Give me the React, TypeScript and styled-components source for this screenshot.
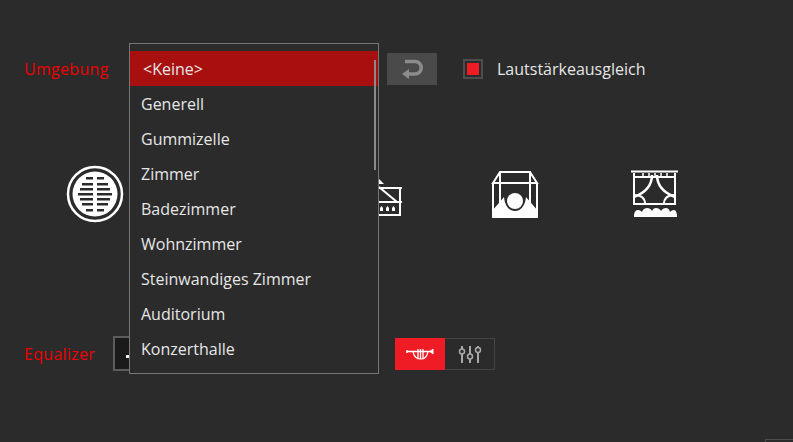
import React from "react"
import styled, { createGlobalStyle } from "styled-components"

const GlobalStyle = createGlobalStyle`
  html, body {
    margin: 0;
    padding: 0;
    background: #2b2b2b;
  }
`

const Page = styled.div`
  position: relative;
  width: 793px;
  height: 442px;
  overflow: hidden;
  box-sizing: border-box;
  padding: 53px 0 0 25px;
  background: #2b2b2b;
  font-family: "Open Sans", "Noto Sans", sans-serif;
  font-size: 16px;
  color: #e6e6e6;
`

const Row = styled.div`
  display: flex;
  align-items: center;
`

const FieldLabel = styled.div<{ $width: number }>`
  width: ${props => props.$width}px;
  margin-left: -1px;
  color: #f00000;
  font-size: 16px;
  letter-spacing: 0.3px;
`

const ComboSpacer = styled.div`
  width: 258px;
  height: 32px;
`

const ResetButton = styled.div`
  width: 50px;
  height: 32px;
  display: flex;
  align-items: center;
  justify-content: center;
  background: #4a4a4a;
  margin-right: 26px;
`

const CheckBox = styled.div`
  width: 20px;
  height: 20px;
  box-sizing: border-box;
  border: 2px solid #4d4d4d;
  padding: 2px;
  margin-right: 14px;
`

const CheckMark = styled.div`
  width: 12px;
  height: 12px;
  background: #ef1c25;
`

const IconRow = styled.div`
  display: grid;
  grid-template-columns: repeat(5, 140px);
  height: 60px;
  margin-top: 79px;
  align-items: center;
  justify-items: center;
`

const EqRow = styled(Row)`
  margin-top: 112px;
`

const EqCombo = styled.div`
  width: 260px;
  height: 35px;
  box-sizing: border-box;
  display: flex;
  align-items: center;
  padding: 5px 0 0 11px;
  border: 2px solid #5c5c5c;
  background: #1a1a1a;
  margin-right: 22px;
`

const ComboGlyph = styled.div`
  width: 3px;
  height: 3px;
  background: #f0f0f0;
`

const ToggleGroup = styled.div`
  display: flex;
  height: 32px;
`

const Toggle = styled.div<{ $active?: boolean }>`
  width: 50px;
  height: 32px;
  box-sizing: border-box;
  display: flex;
  align-items: center;
  justify-content: center;
  background: ${props => (props.$active ? "#ef1c25" : "transparent")};
  border: 1px solid ${props => (props.$active ? "#ef1c25" : "#444444")};
  border-left-width: ${props => (props.$active ? 1 : 0)}px;
`

const DropDown = styled.div`
  position: absolute;
  left: 129px;
  top: 43px;
  width: 250px;
  height: 331px;
  box-sizing: border-box;
  padding: 7px 0;
  border: 1px solid #767676;
  background: #2b2b2b;
`

const Option = styled.div<{ $selected?: boolean }>`
  height: 35px;
  line-height: 37px;
  padding-left: ${props => (props.$selected ? 13 : 11)}px;
  color: #e6e6e6;
  background: ${props => (props.$selected ? "#a81010" : "transparent")};
`

const ScrollThumb = styled.div`
  position: absolute;
  left: 244px;
  top: 16px;
  width: 2px;
  height: 110px;
  background: #8a8a8a;
`

const CornerMark = styled.div`
  position: absolute;
  right: 0;
  bottom: 0;
  width: 27px;
  height: 2px;
  border-top: 1px solid #4d4d4d;
  border-left: 1px solid #4d4d4d;
`

const options = [
  "<Keine>",
  "Generell",
  "Gummizelle",
  "Zimmer",
  "Badezimmer",
  "Wohnzimmer",
  "Steinwandiges Zimmer",
  "Auditorium",
  "Konzerthalle",
]

const ReturnIcon = () => (
  <svg width="24" height="20" viewBox="0 0 24 20" fill="none">
    <path d="M5 2.500h10a6.250 6.250 0 0 1 0 12.500H7" stroke="#8c8c8c" strokeWidth="3.500" />
    <path d="M2 15l7-5v10z" fill="#8c8c8c" />
  </svg>
)

const GrilleIcon = () => {
  const slats = [
    [14, 7],
    [20, 11],
    [25, 13],
    [30, 15],
    [35, 13],
    [40, 11],
    [46, 7],
  ]
  return (
    <svg width="58" height="60" viewBox="0 0 58 60">
      <circle cx="29" cy="30" r="27" fill="none" stroke="#fff" strokeWidth="2.500" />
      <circle cx="29" cy="30" r="22.500" fill="#fff" />
      {slats.map(([y, w]) => (
        <g key={y} fill="#2b2b2b">
          <rect x={27 - w} y={y - 1} width={w} height="2.500" />
          <rect x={31} y={y - 1} width={w} height="2.500" />
        </g>
      ))}
    </svg>
  )
}

const HallIcon = () => (
  <svg width="56" height="60" viewBox="0 0 56 60" fill="none" stroke="#fff" strokeWidth="2">
    <path d="M2 24h53M53 24v27H2M2 38h53" />
    <path d="M32 23l18 15" />
    <g fill="#fff" stroke="none">
      <path d="M33 44l1.500-2 1.500 2v3h-3zM39 44l1.500-2 1.500 2v3h-3zM45 44l1.500-2 1.500 2v3h-3z" />
      <path d="M32 15l5 5h-5z" />
    </g>
  </svg>
)

const BoxIcon = () => (
  <svg width="48" height="48" viewBox="0 0 48 48" fill="none" stroke="#fff" strokeWidth="2">
    <path d="M2 13L9 2h30l7 11H2zM2 13v34h44V13M9 2v11M39 2v11M9 13v22M39 13v22" />
    <path d="M1 47v-6L13 27c1 10 6 14 11 14s10-4 11-14l12 14v6z" fill="#fff" stroke="none" />
    <circle cx="24" cy="31" r="8" fill="#fff" stroke="none" />
  </svg>
)

const CurtainIcon = () => (
  <svg width="48" height="48" viewBox="0 0 48 48" fill="none" stroke="#fff" strokeWidth="2">
    <path d="M0 1.500h47" />
    <path d="M3 3v31h41V3M3 7h41" />
    <path d="M12 3v4M18 3v4M24 3v4M30 3v4M36 3v4" strokeWidth="1.500" />
    <path d="M21 5c0 10-5 17-18 22M26 5c0 10 5 17 18 22" strokeWidth="2.500" />
    <path d="M3 25c8 0 11 4 11 9M44 25c-8 0-11 4-11 9" strokeWidth="2" />
    <path
      d="M3 47c0-4 1-7 4-7 2 0 3 1 4 2 1-3 3-4 5-4s4 1 5 3c1-2 2-3 4-3s4 1 5 3c1-2 3-3 5-3s3 1 4 4c1-1 2-2 4-2 2 0 3 3 3 7z"
      fill="#fff"
      stroke="none"
    />
  </svg>
)

const TrumpetIcon = () => (
  <svg width="28" height="12" viewBox="0 0 28 12" fill="none" stroke="#fff">
    <path d="M1 2v3M1 3.500h24" strokeWidth="1.500" />
    <path d="M24 3.500L27 1v5z" fill="#fff" strokeWidth="1" />
    <path d="M7 4c1 4 4 7 8 7s6-3 7-7" strokeWidth="1.200" />
    <path d="M12 1v10M14.500 1v10M17 1v10" strokeWidth="1.300" />
  </svg>
)

const SlidersIcon = () => (
  <svg width="24" height="18" viewBox="0 0 24 18" fill="none" stroke="#a8a8a8" strokeWidth="1.500">
    <path d="M4 1v3M4 9v9M12 1v8M12 14v4M20 1v1M20 7.500v10.500" strokeWidth="2" />
    <circle cx="4" cy="6.500" r="2.500" />
    <circle cx="12" cy="11.500" r="2.500" />
    <circle cx="20" cy="5" r="2.500" />
  </svg>
)

const App = () => {
  return (
    <Page>
      <GlobalStyle />
      <Row>
        <FieldLabel $width={105}>Umgebung</FieldLabel>
        <ComboSpacer />
        <ResetButton><ReturnIcon /></ResetButton>
        <CheckBox><CheckMark /></CheckBox>
        <span>Lautstärkeausgleich</span>
      </Row>
      <IconRow>
        <GrilleIcon />
        <div />
        <HallIcon />
        <BoxIcon />
        <CurtainIcon />
      </IconRow>
      <EqRow>
        <FieldLabel $width={89}>Equalizer</FieldLabel>
        <EqCombo><ComboGlyph /></EqCombo>
        <ToggleGroup>
          <Toggle $active><TrumpetIcon /></Toggle>
          <Toggle><SlidersIcon /></Toggle>
        </ToggleGroup>
      </EqRow>
      <DropDown>
        {options.map((o, i) => (
          <Option key={o} $selected={i === 0}>{o}</Option>
        ))}
        <ScrollThumb />
      </DropDown>
      <CornerMark />
    </Page>
  )
}

export default App
